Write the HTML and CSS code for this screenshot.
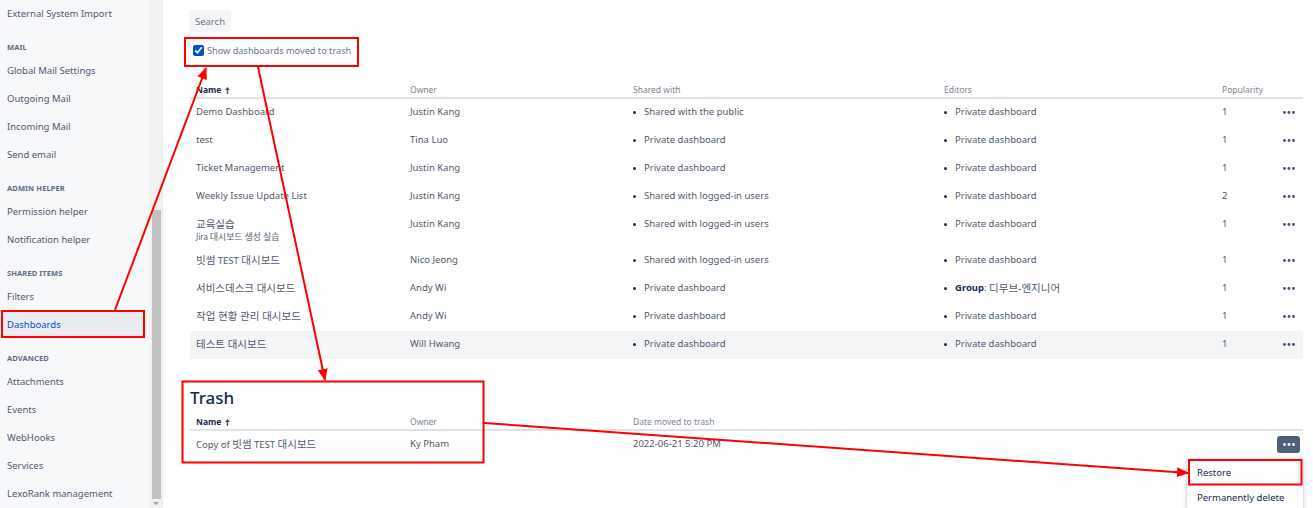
FILE: index.html
```html
<!DOCTYPE html>
<html lang="en">
<head>
<meta charset="utf-8">
<title>Dashboards</title>
<link rel="stylesheet" href="styles.css">
</head>
<body>
<div class="page">
  <aside class="sidebar">
    <nav class="nav">
      <a class="nav-item">External System Import</a>
      <h3 class="nav-head">MAIL</h3>
      <a class="nav-item">Global Mail Settings</a>
      <a class="nav-item">Outgoing Mail</a>
      <a class="nav-item">Incoming Mail</a>
      <a class="nav-item">Send email</a>
      <h3 class="nav-head">ADMIN HELPER</h3>
      <a class="nav-item">Permission helper</a>
      <a class="nav-item">Notification helper</a>
      <h3 class="nav-head">SHARED ITEMS</h3>
      <a class="nav-item">Filters</a>
      <a class="nav-item active">Dashboards</a>
      <h3 class="nav-head">ADVANCED</h3>
      <a class="nav-item">Attachments</a>
      <a class="nav-item">Events</a>
      <a class="nav-item">WebHooks</a>
      <a class="nav-item">Services</a>
      <a class="nav-item">LexoRank management</a>
    </nav>
  </aside>
  <div class="scrollbar">
    <div class="thumb"></div>
    <div class="scroll-arrow"></div>
  </div>
  <main class="main">
    <button class="search-btn" type="button">Search</button>
    <label class="trash-toggle">
      <input type="checkbox" checked>
      <span>Show dashboards moved to trash</span>
    </label>

    <table class="dash-table">
      <colgroup>
        <col class="c-name"><col class="c-owner"><col class="c-shared"><col class="c-editors"><col class="c-pop"><col class="c-act">
      </colgroup>
      <thead>
        <tr>
          <th class="sorted"><div class="cell">Name <svg class="sort" width="5" height="7" viewBox="0 0 5 7"><path d="M2.5 0L5 3H3.2V7H1.8V3H0Z"/></svg></div></th>
          <th><div class="cell">Owner</div></th>
          <th><div class="cell">Shared with</div></th>
          <th><div class="cell">Editors</div></th>
          <th><div class="cell">Popularity</div></th>
          <th></th>
        </tr>
      </thead>
      <tbody>
        <tr>
          <td><div class="cell">Demo Dashboard</div></td><td><div class="cell">Justin Kang</div></td>
          <td><div class="cell bullet">Shared with the public</div></td>
          <td><div class="cell bullet">Private dashboard</div></td>
          <td><div class="cell">1</div></td><td class="act"><div class="dots"><svg width="12" height="3" viewBox="0 0 12 3"><circle cx="1.5" cy="1.5" r="1.4"/><circle cx="6" cy="1.5" r="1.4"/><circle cx="10.5" cy="1.5" r="1.4"/></svg></div></td>
        </tr>
        <tr>
          <td><div class="cell">test</div></td><td><div class="cell">Tina Luo</div></td>
          <td><div class="cell bullet">Private dashboard</div></td>
          <td><div class="cell bullet">Private dashboard</div></td>
          <td><div class="cell">1</div></td><td class="act"><div class="dots"><svg width="12" height="3" viewBox="0 0 12 3"><circle cx="1.5" cy="1.5" r="1.4"/><circle cx="6" cy="1.5" r="1.4"/><circle cx="10.5" cy="1.5" r="1.4"/></svg></div></td>
        </tr>
        <tr>
          <td><div class="cell">Ticket Management</div></td><td><div class="cell">Justin Kang</div></td>
          <td><div class="cell bullet">Private dashboard</div></td>
          <td><div class="cell bullet">Private dashboard</div></td>
          <td><div class="cell">1</div></td><td class="act"><div class="dots"><svg width="12" height="3" viewBox="0 0 12 3"><circle cx="1.5" cy="1.5" r="1.4"/><circle cx="6" cy="1.5" r="1.4"/><circle cx="10.5" cy="1.5" r="1.4"/></svg></div></td>
        </tr>
        <tr>
          <td><div class="cell">Weekly Issue Update List</div></td><td><div class="cell">Justin Kang</div></td>
          <td><div class="cell bullet">Shared with logged-in users</div></td>
          <td><div class="cell bullet">Private dashboard</div></td>
          <td><div class="cell">2</div></td><td class="act"><div class="dots"><svg width="12" height="3" viewBox="0 0 12 3"><circle cx="1.5" cy="1.5" r="1.4"/><circle cx="6" cy="1.5" r="1.4"/><circle cx="10.5" cy="1.5" r="1.4"/></svg></div></td>
        </tr>
        <tr>
          <td><div class="cell"><span class="ko">교육실습</span></div><div class="desc">Jira <span class="ko">대시보드 생성 실습</span></div></td><td><div class="cell">Justin Kang</div></td>
          <td><div class="cell bullet">Shared with logged-in users</div></td>
          <td><div class="cell bullet">Private dashboard</div></td>
          <td><div class="cell">1</div></td><td class="act"><div class="dots"><svg width="12" height="3" viewBox="0 0 12 3"><circle cx="1.5" cy="1.5" r="1.4"/><circle cx="6" cy="1.5" r="1.4"/><circle cx="10.5" cy="1.5" r="1.4"/></svg></div></td>
        </tr>
        <tr>
          <td><div class="cell"><span class="ko">빗썸</span> TEST <span class="ko">대시보드</span></div></td><td><div class="cell">Nico Jeong</div></td>
          <td><div class="cell bullet">Shared with logged-in users</div></td>
          <td><div class="cell bullet">Private dashboard</div></td>
          <td><div class="cell">1</div></td><td class="act"><div class="dots"><svg width="12" height="3" viewBox="0 0 12 3"><circle cx="1.5" cy="1.5" r="1.4"/><circle cx="6" cy="1.5" r="1.4"/><circle cx="10.5" cy="1.5" r="1.4"/></svg></div></td>
        </tr>
        <tr>
          <td><div class="cell"><span class="ko">서비스데스크 대시보드</span></div></td><td><div class="cell">Andy Wi</div></td>
          <td><div class="cell bullet">Private dashboard</div></td>
          <td><div class="cell bullet"><b>Group</b>:&nbsp;<span class="ko">디무브-엔지니어</span></div></td>
          <td><div class="cell">1</div></td><td class="act"><div class="dots"><svg width="12" height="3" viewBox="0 0 12 3"><circle cx="1.5" cy="1.5" r="1.4"/><circle cx="6" cy="1.5" r="1.4"/><circle cx="10.5" cy="1.5" r="1.4"/></svg></div></td>
        </tr>
        <tr>
          <td><div class="cell"><span class="ko">작업 현황 관리 대시보드</span></div></td><td><div class="cell">Andy Wi</div></td>
          <td><div class="cell bullet">Private dashboard</div></td>
          <td><div class="cell bullet">Private dashboard</div></td>
          <td><div class="cell">1</div></td><td class="act"><div class="dots"><svg width="12" height="3" viewBox="0 0 12 3"><circle cx="1.5" cy="1.5" r="1.4"/><circle cx="6" cy="1.5" r="1.4"/><circle cx="10.5" cy="1.5" r="1.4"/></svg></div></td>
        </tr>
        <tr class="hover">
          <td><div class="cell"><span class="ko">테스트 대시보드</span></div></td><td><div class="cell">Will Hwang</div></td>
          <td><div class="cell bullet">Private dashboard</div></td>
          <td><div class="cell bullet">Private dashboard</div></td>
          <td><div class="cell">1</div></td><td class="act"><div class="dots"><svg width="12" height="3" viewBox="0 0 12 3"><circle cx="1.5" cy="1.5" r="1.4"/><circle cx="6" cy="1.5" r="1.4"/><circle cx="10.5" cy="1.5" r="1.4"/></svg></div></td>
        </tr>
      </tbody>
    </table>

    <h2 class="trash-title">Trash</h2>
    <table class="dash-table trash-table">
      <colgroup>
        <col class="c-name"><col class="c-owner"><col><col class="c-act2">
      </colgroup>
      <thead>
        <tr>
          <th class="sorted"><div class="cell">Name <svg class="sort" width="5" height="7" viewBox="0 0 5 7"><path d="M2.5 0L5 3H3.2V7H1.8V3H0Z"/></svg></div></th>
          <th><div class="cell">Owner</div></th>
          <th><div class="cell">Date moved to trash</div></th>
          <th></th>
        </tr>
      </thead>
      <tbody>
        <tr>
          <td><div class="cell">Copy of <span class="ko">빗썸</span> TEST <span class="ko">대시보드</span></div></td>
          <td><div class="cell">Ky Pham</div></td>
          <td><div class="cell">2022-06-21 5:20 PM</div></td>
          <td class="act act-open">
            <div class="dots-btn"><svg width="12" height="3" viewBox="0 0 12 3"><circle cx="1.5" cy="1.5" r="1.4"/><circle cx="6" cy="1.5" r="1.4"/><circle cx="10.5" cy="1.5" r="1.4"/></svg></div>
            <div class="menu">
              <div class="menu-item">Restore</div>
              <div class="menu-item">Permanently delete</div>
            </div>
          </td>
        </tr>
      </tbody>
    </table>
  </main>

  <svg class="annot" width="1313" height="508" viewBox="0 0 1313 508">
    <defs>
      <marker id="head" markerUnits="userSpaceOnUse" markerWidth="12" markerHeight="10" viewBox="0 0 12 10" refX="11" refY="5" orient="auto">
        <path d="M0 0L12 5L0 10Z" fill="#ff0000"/>
      </marker>
    </defs>
    <g fill="none" stroke="#ff0000" stroke-width="2">
      <rect x="185" y="38" width="173" height="28"/>
      <rect x="2" y="311" width="142" height="26"/>
      <rect x="182.5" y="381.5" width="301" height="81"/>
      <rect x="1189" y="460" width="112.5" height="24.5"/>
      <line x1="115" y1="310" x2="206" y2="68" marker-end="url(#head)"/>
      <line x1="258" y1="67" x2="325" y2="380" marker-end="url(#head)"/>
      <line x1="484" y1="423" x2="1188" y2="473" marker-end="url(#head)"/>
    </g>
  </svg>
</div>
</body>
</html>
```

FILE: styles.css
```css
* { box-sizing: border-box; }

html, body {
  margin: 0;
  height: 100%;
  overflow: hidden;
}

body {
  font-family: "Noto Sans", "Noto Sans CJK KR", sans-serif;
  font-size: 9.5px;
  color: #4f5b6e;
  background: #ffffff;
}

.page {
  position: relative;
  display: flex;
  width: 1313px;
  height: 508px;
  overflow: hidden;
}

/* Sidebar */
.sidebar {
  width: 150px;
  flex: none;
  background: #f7f8fa;
}

.nav {
  display: flex;
  flex-direction: column;
}

.nav-item {
  display: block;
  height: 28px;
  line-height: 28px;
  padding-left: 7px;
  color: #4f5b6e;
  text-decoration: none;
  white-space: nowrap;
}

.nav-item.active {
  background: #ebecf0;
  color: #0052cc;
  margin: 0 6px 0 3px;
  padding-left: 4px;
}

.nav-head {
  margin: 9px 0 0;
  height: 20px;
  line-height: 20px;
  padding-left: 7px;
  font-size: 7.5px;
  font-weight: 700;
  color: #5e6c84;
  letter-spacing: 0.1px;
}

/* fake scrollbar */
.scrollbar {
  width: 13px;
  flex: none;
  background: #f1f1f1;
  border-right: 1px solid #ebecf0;
  display: flex;
  flex-direction: column;
  align-items: center;
}

.thumb {
  margin-top: 210px;
  width: 9px;
  height: 289px;
  background: #c1c1c1;
}

.scroll-arrow {
  margin-top: 3px;
  width: 0;
  height: 0;
  border-left: 3px solid transparent;
  border-right: 3px solid transparent;
  border-top: 3px solid #a3a3a3;
}

/* Main */
.main {
  flex: 1;
  padding: 10px 10px 0 27px;
  min-width: 0;
}

.search-btn {
  display: block;
  margin-left: -1px;
  height: 22px;
  width: 42px;
  padding: 0;
  border: none;
  border-radius: 3px;
  background: #f4f5f7;
  color: #6b778c;
  font-family: inherit;
  font-size: 9.5px;
}

.trash-toggle {
  display: flex;
  align-items: center;
  height: 20px;
  margin-top: 8px;
  color: #6b778c;
  font-size: 9.2px;
}

.trash-toggle input {
  width: 11px;
  height: 11px;
  margin: 0 3px 0 3px;
  accent-color: #0052cc;
}

/* Tables */
.dash-table {
  width: 100%;
  border-collapse: collapse;
  table-layout: fixed;
  margin-top: 19px;
}

.c-name { width: 214px; }
.c-owner { width: 223px; }
.c-shared { width: 311px; }
.c-editors { width: 278px; }
.c-pop { width: 54px; }
.c-act { width: 33px; }
.c-act2 { width: 60px; }

.cell {
  height: 14px;
  line-height: 14px;
  white-space: nowrap;
}

.ko {
  font-size: 10.5px;
}

.dash-table th {
  text-align: left;
  font-weight: 400;
  font-size: 8.5px;
  color: #7a869a;
  padding: 4px 6px 0;
  border-bottom: 2px solid #dfe1e6;
  vertical-align: top;
}

.dash-table th.sorted {
  color: #172b4d;
  font-weight: 700;
}

.sort {
  fill: #42526e;
  vertical-align: -1px;
  margin-left: 1px;
}

.dash-table td {
  padding: 6px 6px 8px;
  vertical-align: top;
}

.dash-table tr.hover td {
  background: #f4f5f7;
}

.desc {
  font-size: 8px;
  height: 12px;
  line-height: 12px;
  margin-bottom: -4px;
  white-space: nowrap;
}

.desc .ko {
  font-size: 8.8px;
}

.bullet {
  display: flex;
  align-items: center;
}

.bullet::before {
  content: "";
  flex: none;
  width: 3px;
  height: 3px;
  border-radius: 50%;
  background: #172b4d;
  margin-right: 8px;
}

.bullet b {
  color: #172b4d;
}

.dash-table td.act {
  padding-right: 3px;
}

.dots {
  display: flex;
  align-items: center;
  justify-content: center;
  width: 23px;
  height: 14px;
  margin-left: auto;
  fill: #42526e;
}

/* Trash */
.trash-title {
  margin: 29px 0 3px;
  font-size: 17px;
  line-height: 20px;
  font-weight: 500;
  color: #172b4d;
}

.trash-table {
  margin-top: 0;
}

.dash-table td.act-open {
  position: relative;
  padding-top: 5px;
  padding-bottom: 6px;
}

.dots-btn {
  display: flex;
  align-items: center;
  justify-content: center;
  width: 23px;
  height: 17px;
  margin-left: auto;
  border-radius: 3px;
  background: #505f79;
  fill: #ffffff;
}

.menu {
  position: absolute;
  top: 100%;
  right: 0;
  width: 116px;
  background: #ffffff;
  box-shadow: 0 2px 6px rgba(9, 30, 66, 0.2), 0 0 1px rgba(9, 30, 66, 0.3);
  padding-top: 1px;
}

.menu-item {
  height: 25px;
  line-height: 25px;
  padding-left: 10px;
  color: #172b4d;
  white-space: nowrap;
}

/* annotation overlay */
.annot {
  position: absolute;
  left: 0;
  top: 0;
  pointer-events: none;
}
```
